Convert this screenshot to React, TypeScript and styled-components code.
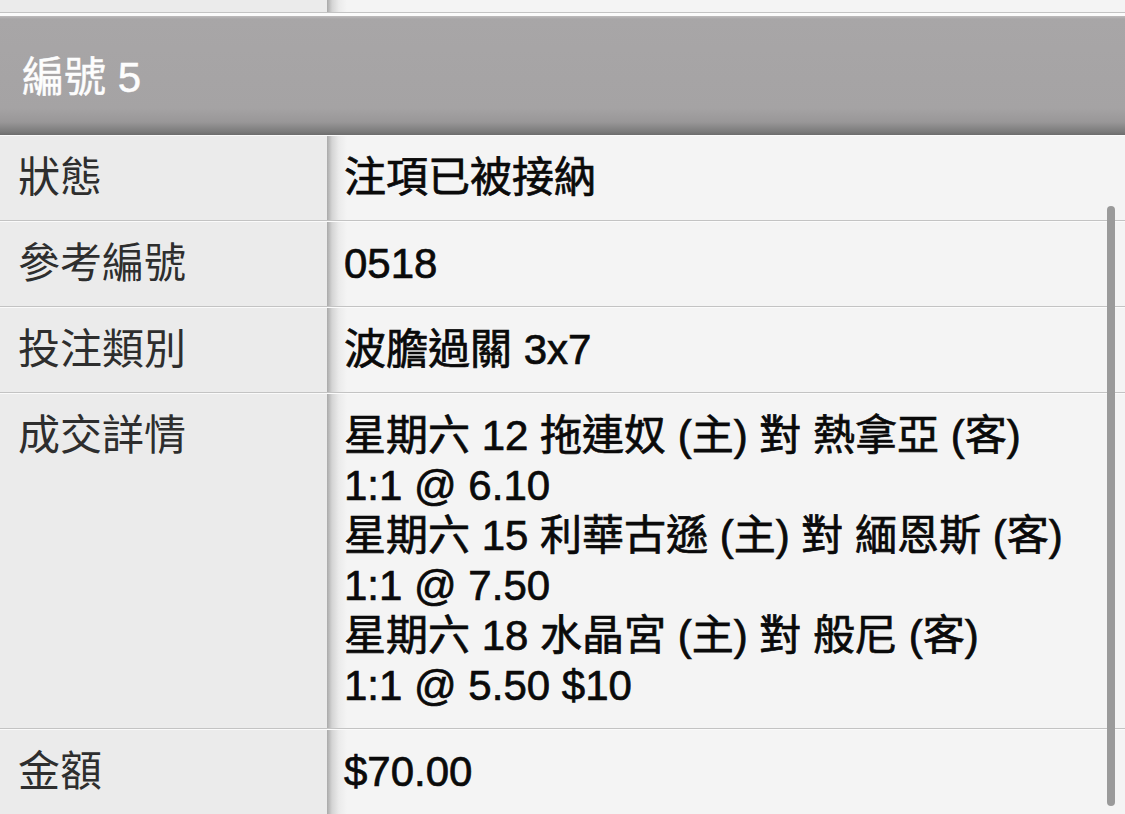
import React from 'react'
import styled, { createGlobalStyle } from 'styled-components'

const GlobalStyle = createGlobalStyle`
  html, body {
    margin: 0;
    padding: 0;
    background: #f4f4f4;
    overflow: hidden;
  }
  body {
    font-family: 'Liberation Sans', 'Noto Sans CJK TC', sans-serif;
  }
`

interface Entry {
  label: string
  lines: string[]
}

const entries: Entry[] = [
  { label: '狀態', lines: ['注項已被接納'] },
  { label: '參考編號', lines: ['0518'] },
  { label: '投注類別', lines: ['波膽過關 3x7'] },
  {
    label: '成交詳情',
    lines: [
      '星期六 12 拖連奴 (主) 對 熱拿亞 (客)',
      '1:1 @ 6.10',
      '星期六 15 利華古遜 (主) 對 緬恩斯 (客)',
      '1:1 @ 7.50',
      '星期六 18 水晶宮 (主) 對 般尼 (客)',
      '1:1 @ 5.50 $10',
    ],
  },
  { label: '金額', lines: ['$70.00'] },
]

const Screen = styled.div`
  position: relative;
  width: 1125px;
  height: 814px;
  overflow: hidden;
  background: #f4f4f4;
`

const Row = styled.div`
  display: grid;
  grid-template-columns: 327px 1fr;
  border-bottom: 1px solid #c3c3c3;
`

const LabelCell = styled.div<{ $stub?: boolean }>`
  background: #ebebeb;
  border-top: 1px solid ${({ $stub }) => ($stub ? '#ebebeb' : '#fafafa')};
  height: ${({ $stub }) => ($stub ? '11px' : 'auto')};
  padding: ${({ $stub }) => ($stub ? '0' : '17px 0 17px 18px')};
  font-size: 42px;
  line-height: 50px;
  color: #2e2e2e;
`

const ValueCell = styled.div<{ $stub?: boolean }>`
  background: linear-gradient(to right, #a9a9a9 0, #d4d4d4 5px, #ebebeb 12px, #f4f4f4 20px);
  border-top: 1px solid ${({ $stub }) => ($stub ? 'transparent' : '#fbfbfb')};
  height: ${({ $stub }) => ($stub ? '11px' : 'auto')};
  padding: ${({ $stub }) => ($stub ? '0' : '17px 0 17px 17px')};
  font-size: 42px;
  line-height: 50px;
  color: #0a0a0a;
  -webkit-text-stroke: 0.7px #0a0a0a;
  white-space: nowrap;
`

const Line = styled.div``

const Gap = styled.div`
  height: 3px;
  background: #fbfbfb;
`

const Header = styled.div`
  height: 119px;
  box-sizing: border-box;
  display: flex;
  align-items: center;
  padding: 5px 0 0 22px;
  background: linear-gradient(
    to bottom,
    #bdbbbc 0,
    #a8a6a7 3px,
    #a5a3a4 92px,
    #999798 106px,
    #7a7a7a 116px,
    #6c6c6c 119px
  );
  color: #fdfdfd;
  font-size: 42px;
  line-height: 50px;
  -webkit-text-stroke: 0.5px #fdfdfd;
`

const ScrollThumb = styled.div`
  position: absolute;
  left: 1107px;
  top: 206px;
  width: 8px;
  height: 600px;
  border-radius: 4px;
  background: #9a9a9a;
`

export default function App() {
  return (
    <Screen>
      <GlobalStyle />
      <Row>
        <LabelCell $stub />
        <ValueCell $stub />
      </Row>
      <Gap />
      <Header>編號 5</Header>
      {entries.map((entry) => (
        <Row key={entry.label}>
          <LabelCell>{entry.label}</LabelCell>
          <ValueCell>
            {entry.lines.map((line, i) => (
              <Line key={i}>{line}</Line>
            ))}
          </ValueCell>
        </Row>
      ))}
      <ScrollThumb />
    </Screen>
  )
}
